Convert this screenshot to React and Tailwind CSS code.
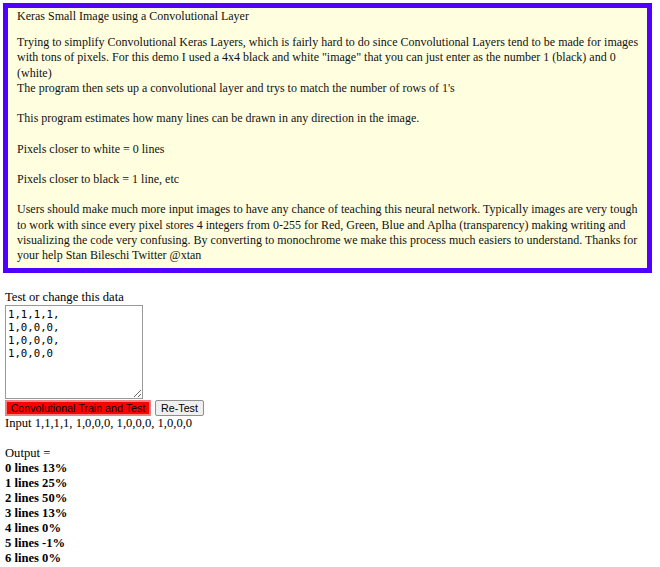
export default function App() {
  const serif = { fontFamily: '"Liberation Serif", serif' };
  const sans = { fontFamily: '"Liberation Sans", sans-serif' };
  return (
    <div className="bg-white text-black" style={serif}>
      <div className="pt-[3px] pl-[3px]">
        <div className="w-[649px] border-[5px] border-[#4f00ff] bg-[#ffffe0] pl-[9px] pr-[3px] pt-[1px] pb-[5px] text-[12px] leading-[15.2px] text-[#111]">
          <div>Keras Small Image using a Convolutional Layer</div>
          <div className="mt-[11px]">
            Trying to simplify Convolutional Keras Layers, which is fairly hard to do since Convolutional Layers tend to be made for images with tons of pixels. For this demo I used a 4x4 black and white "image" that you can just enter as the number 1 (black) and 0 (white)
            <br />
            The program then sets up a convolutional layer and trys to match the number of rows of 1's
            <br />
            <br />
            This program estimates how many lines can be drawn in any direction in the image.
            <br />
            <br />
            Pixels closer to white = 0 lines
            <br />
            <br />
            Pixels closer to black = 1 line, etc
            <br />
            <br />
            Users should make much more input images to have any chance of teaching this neural network. Typically images are very tough to work with since every pixel stores 4 integers from 0-255 for Red, Green, Blue and Aplha (transparency) making writing and visualizing the code very confusing. By converting to monochrome we make this process much easiers to understand. Thanks for your help Stan Bileschi Twitter @xtan
          </div>
        </div>
      </div>
      <div className="pl-[5px] pt-[17px] text-[12.6px] leading-[15px]">
        <div>Test or change this data</div>
        <textarea
          defaultValue={"1,1,1,1,\n1,0,0,0,\n1,0,0,0,\n1,0,0,0"}
          className="block w-[138px] h-[94px] border border-[#999] px-[2px] py-[2px] text-[10.7px] leading-[13px] text-black resize-y"
          style={{ fontFamily: '"DejaVu Sans Mono", monospace' }}
        />
        <div className="flex items-center gap-[4px] mt-[1px]">
          <button
            className="h-[16px] w-[146px] whitespace-nowrap bg-[#ff0000] border-2 border-[#f08080] text-black text-[10.7px] leading-[12px] px-0"
            style={sans}
          >
            Convolutional Train and Test
          </button>
          <button
            className="h-[16px] w-[49px] whitespace-nowrap bg-[#efefef] border border-[#8f8f8f] rounded-[2px] text-black text-[10.7px] leading-[12px] px-0"
            style={sans}
          >
            Re-Test
          </button>
        </div>
        <div>Input 1,1,1,1, 1,0,0,0, 1,0,0,0, 1,0,0,0</div>
        <div className="h-[15px]" />
        <div>Output =</div>
        <div className="font-bold">0 lines 13%</div>
        <div className="font-bold">1 lines 25%</div>
        <div className="font-bold">2 lines 50%</div>
        <div className="font-bold">3 lines 13%</div>
        <div className="font-bold">4 lines 0%</div>
        <div className="font-bold">5 lines -1%</div>
        <div className="font-bold">6 lines 0%</div>
      </div>
    </div>
  );
}
